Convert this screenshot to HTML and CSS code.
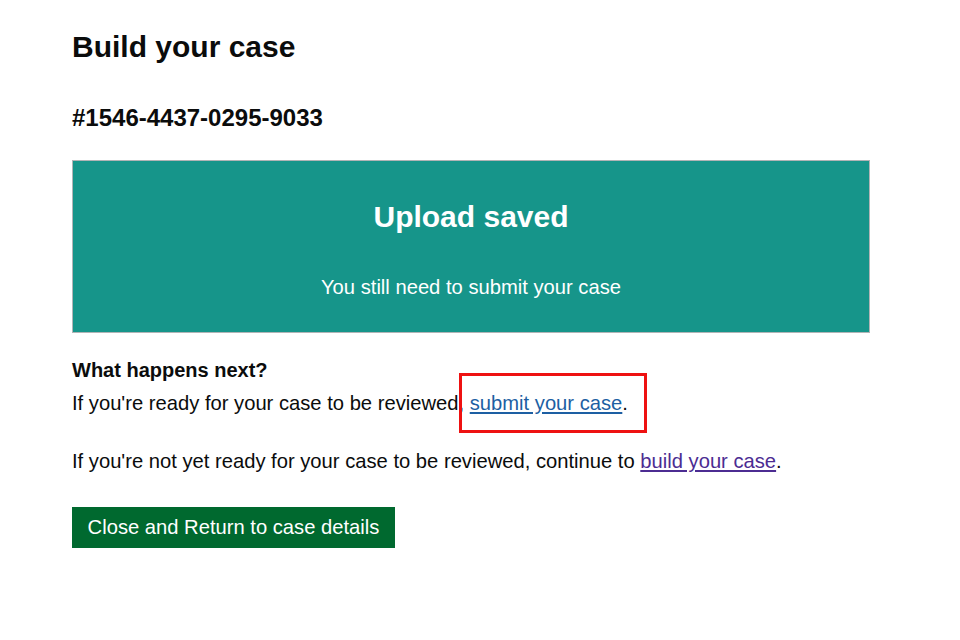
FILE: index.html
```html
<!DOCTYPE html>
<html lang="en">
<head>
<meta charset="utf-8">
<title>Build your case</title>
<link rel="stylesheet" href="styles.css">
</head>
<body>
<main class="page">
  <h1 class="title">Build your case</h1>
  <h2 class="case-ref">#1546-4437-0295-9033</h2>
  <div class="panel">
    <h2 class="panel-title">Upload saved</h2>
    <p class="panel-body">You still need to submit your case</p>
  </div>
  <h3 class="next-heading">What happens next?</h3>
  <p class="body first">If you're ready for your case to be reviewed, <span class="highlight-wrap"><a href="#" class="link">submit your case</a><span class="highlight"></span></span>.</p>
  <p class="body">If you're not yet ready for your case to be reviewed, continue to <a href="#" class="link visited">build your case</a>.</p>
  <button class="button" type="button">Close and Return to case details</button>
</main>
</body>
</html>
```
FILE: styles.css
```css
html, body {
  margin: 0;
  padding: 0;
  background: #ffffff;
}
body {
  font-family: "Liberation Sans", Arial, sans-serif;
  color: #0b0c0c;
}
.page {
  padding: 30px 72px 0 72px;
  width: 798px;
}
.title {
  font-size: 30px;
  font-weight: 700;
  line-height: 34px;
  margin: 0 0 39px 0;
}
.case-ref {
  font-size: 24px;
  font-weight: 700;
  line-height: 30px;
  margin: 0 0 27px 0;
}
.panel {
  background: #16958a;
  border: 1px solid #b1b4b6;
  color: #ffffff;
  text-align: center;
  padding: 39px 20px 0;
  box-sizing: border-box;
  height: 173px;
}
.panel-title {
  font-size: 30px;
  font-weight: 700;
  line-height: 34px;
  margin: 0 0 41px 0;
}
.panel-body {
  font-size: 20.2px;
  line-height: 25px;
  margin: 0;
}
.next-heading {
  font-size: 20px;
  font-weight: 700;
  line-height: 25px;
  margin: 25px 0 8px 0;
}
.body {
  font-size: 20.2px;
  line-height: 25px;
  margin: 0 0 33px 0;
}
.link {
  color: #1d5fa3;
  text-decoration: underline;
  text-underline-offset: 2px;
}
.link.visited {
  color: #4c2c92;
}
.highlight-wrap {
  position: relative;
}
.highlight {
  position: absolute;
  left: -11px;
  top: -19px;
  width: 188px;
  height: 60px;
  box-sizing: border-box;
  border: 3px solid #ee1111;
  pointer-events: none;
}
.button {
  display: block;
  margin-top: 0;
  background: #00692f;
  color: #ffffff;
  border: 0;
  box-shadow: 0 2px 0 #002d18;
  font-family: "Liberation Sans", Arial, sans-serif;
  font-size: 20.2px;
  line-height: 25px;
  padding: 0;
  height: 41px;
  width: 323px;
  white-space: nowrap;
  text-align: center;
  cursor: pointer;
}
```
